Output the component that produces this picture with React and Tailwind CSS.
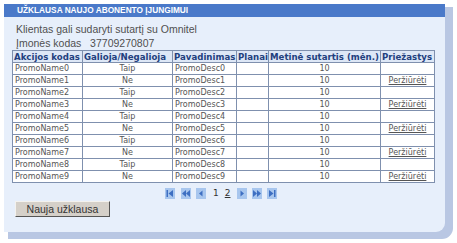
import React from 'react'

const rows = Array.from({ length: 10 }, (_, i) => ({
  name: `PromoName${i}`,
  valid: i % 2 === 0 ? 'Taip' : 'Ne',
  desc: `PromoDesc${i}`,
  plan: '',
  months: 10,
  reason: i % 2 === 1,
}))

const PagerIcon = ({ kind }) => {
  const c = '#3e6fc2'
  return (
    <span className="inline-flex w-[10px] h-[11px] bg-[#a8c6ee] items-center justify-center">
      <svg width="8" height="7" viewBox="0 0 8 7">
        {kind === 'first' && (
          <>
            <rect x="0.5" y="0" width="1.5" height="7" fill={c} />
            <polygon points="7,0 2.5,3.5 7,7" fill={c} />
          </>
        )}
        {kind === 'fastprev' && (
          <>
            <polygon points="4,0 0,3.5 4,7" fill={c} />
            <polygon points="8,0 4,3.5 8,7" fill={c} />
          </>
        )}
        {kind === 'prev' && <polygon points="5.5,0.5 2,3.5 5.5,6.5" fill={c} />}
        {kind === 'next' && <polygon points="2.5,0.5 6,3.5 2.5,6.5" fill={c} />}
        {kind === 'fastnext' && (
          <>
            <polygon points="0,0 4,3.5 0,7" fill={c} />
            <polygon points="4,0 8,3.5 4,7" fill={c} />
          </>
        )}
        {kind === 'last' && (
          <>
            <polygon points="1,0 5.5,3.5 1,7" fill={c} />
            <rect x="6" y="0" width="1.5" height="7" fill={c} />
          </>
        )}
      </svg>
    </span>
  )
}

const App = () => {
  const th = 'border border-[#7f90ae] px-[1px] h-[12px] font-bold text-[#22407e] text-left whitespace-nowrap'
  const td = 'border border-[#7f90ae] px-[2px] h-[12px] whitespace-nowrap'

  return (
    <div className="w-[457px] h-[243px] bg-white pt-[4px] pl-[4px] font-['Liberation_Sans',Arial,sans-serif]">
      <div className="w-[441px] h-[228px] bg-[#e7effb] rounded-br-[9px] shadow-[6px_5px_0_2px_#b9c7e3] flex flex-col">
        {/* Title bar */}
        <div className="h-[13px] bg-[#4a79c9] pl-[13px] flex items-center">
          <span className="text-white font-bold text-[8.3px] leading-none">
            UŽKLAUSA NAUJO ABONENTO ĮJUNGIMUI
          </span>
        </div>

        <div className="pl-[12px] pt-[5px] text-[10.5px] leading-[14px] text-[#505050]">
          <div>Klientas gali sudaryti sutartį su Omnitel</div>
          <div>Įmonės kodas&nbsp;&nbsp; 37709270807</div>
        </div>

        <table className="ml-[8px] w-[422px] table-fixed border-collapse font-['DejaVu_Sans',Verdana,sans-serif] text-[8px] leading-[10px] text-[#555]">
          <colgroup>
            <col className="w-[70px]" />
            <col className="w-[90px]" />
            <col className="w-[64px]" />
            <col className="w-[32px]" />
            <col className="w-[112px]" />
            <col className="w-[54px]" />
          </colgroup>
          <thead>
            <tr className="bg-[#dde7f6] text-[8.6px]">
              <th className={th}>Akcijos kodas</th>
              <th className={th}>Galioja/Negalioja</th>
              <th className={th}>Pavadinimas</th>
              <th className={th}>Planai</th>
              <th className={th}>Metinė sutartis (mėn.)</th>
              <th className={th}>Priežastys</th>
            </tr>
          </thead>
          <tbody className="bg-white">
            {rows.map((r) => (
              <tr key={r.name}>
                <td className={td}>{r.name}</td>
                <td className={`${td} text-center`}>{r.valid}</td>
                <td className={td}>{r.desc}</td>
                <td className={td}>{r.plan}</td>
                <td className={`${td} text-center`}>{r.months}</td>
                <td className={`${td} text-center`}>
                  {r.reason && <span className="underline">Peržiūrėti</span>}
                </td>
              </tr>
            ))}
          </tbody>
        </table>

        {/* Pager */}
        <div className="mt-[5px] ml-[161px] flex items-center h-[11px] text-[9px] leading-[11px] text-[#333] font-['DejaVu_Sans',sans-serif]">
          <PagerIcon kind="first" />
          <span className="w-[6px]" />
          <PagerIcon kind="fastprev" />
          <span className="w-[5px]" />
          <PagerIcon kind="prev" />
          <span className="ml-[7px]">1</span>
          <span className="ml-[6px] underline">2</span>
          <span className="w-[7px]" />
          <PagerIcon kind="next" />
          <span className="w-[5px]" />
          <PagerIcon kind="fastnext" />
          <span className="w-[5px]" />
          <PagerIcon kind="last" />
        </div>

        <div className="mt-[2px] ml-[11px] flex">
          <button className="w-[95px] h-[16px] bg-[#d5d0c9] border border-t-[#f4f2ee] border-l-[#f4f2ee] border-r-[#555] border-b-[#555] text-[10.5px] leading-none text-[#333]">
            Nauja užklausa
          </button>
        </div>
      </div>
    </div>
  )
}

export default App
